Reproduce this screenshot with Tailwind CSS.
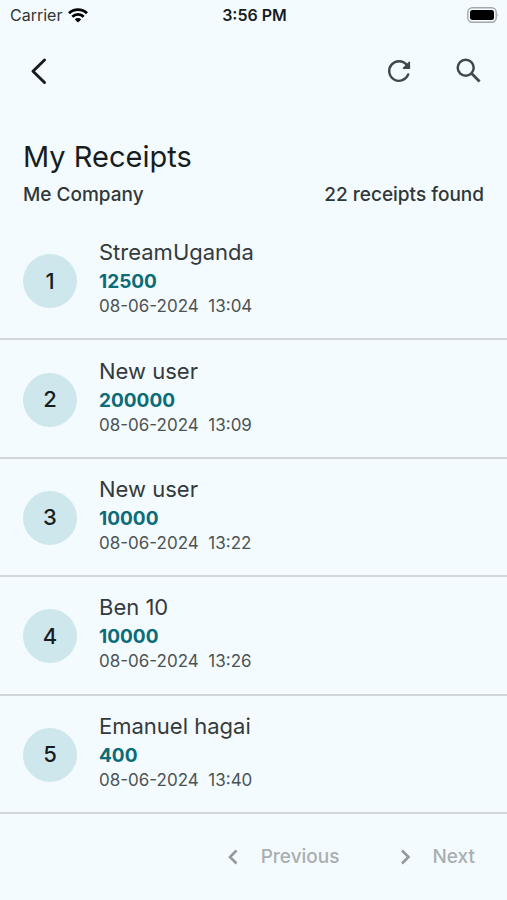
<!DOCTYPE html>
<html lang="en">
<head>
<meta charset="utf-8">
<meta name="viewport" content="width=device-width, initial-scale=1">
<title>My Receipts</title>
<script src="https://cdn.jsdelivr.net/npm/@tailwindcss/browser@4"></script>
</head>
<body class="flex min-h-screen flex-col bg-[#f4fbfe] font-['Inter','Liberation_Sans',sans-serif] text-[#171d1e]">
  <!-- Status bar -->
  <div class="grid h-[30px] grid-cols-3 items-center pr-2 pl-[10px] text-base">
    <div class="flex items-center gap-[6px] text-[#303536]">
      <span>Carrier</span>
      <svg class="h-[15px] w-5" viewBox="0 0 20 15" fill="none" stroke="#000" stroke-width="2.8" aria-label="Wi-Fi">
        <path d="M1 5.2a13 13 0 0 1 18 0M4.3 8.7a8.3 8.3 0 0 1 11.4 0"/>
        <path d="M10 14.6 6.8 11.4a4.6 4.6 0 0 1 6.4 0Z" fill="#000" stroke="none"/>
      </svg>
    </div>
    <div class="text-center font-semibold">3:56 PM</div>
    <svg class="h-4 w-8 justify-self-end" viewBox="0 0 32 16" aria-label="Battery full">
      <rect x=".8" y=".8" width="28.4" height="14.4" rx="4.5" fill="none" stroke="#a3a8a9" stroke-width="1.4"/>
      <rect x="3" y="3" width="24" height="10" rx="2.5" fill="#000"/>
      <path d="M30.5 6q1.5 2 0 4z" fill="#a3a8a9"/>
    </svg>
  </div>

  <!-- Toolbar -->
  <header class="flex h-[82px] items-center justify-between px-[22px]">
    <button class="grid size-8 place-items-center" aria-label="Back">
      <svg class="size-7" viewBox="0 0 28 28" fill="none" stroke="#171d1e" stroke-width="3" stroke-linecap="round" stroke-linejoin="round"><path d="M20.5 3 9 14.2 20.5 25.5"/></svg>
    </button>
    <div class="flex gap-[38px]">
      <button class="grid size-8 place-items-center" aria-label="Refresh">
        <svg class="size-8" viewBox="0 0 32 32" fill="none" stroke="#3f484a" stroke-width="2.4" stroke-linecap="round" stroke-linejoin="round">
          <path d="M25.2 19.4a9.8 9.8 0 1 1-1.6-9.6L26 12.2"/>
          <path d="M26.4 7.2v6h-6z" fill="#3f484a" stroke-width="1.4"/>
        </svg>
      </button>
      <button class="grid size-8 place-items-center" aria-label="Search">
        <svg class="size-8" viewBox="0 0 32 32" fill="none" stroke="#3f484a" stroke-width="2.5"><circle cx="12.7" cy="12.8" r="8"/><path d="m18.6 18.6 8 7.8" stroke-width="2.8"/></svg>
      </button>
    </div>
  </header>

  <!-- Heading -->
  <section class="px-[23px] pt-[26px]">
    <h1 class="text-[29px] leading-[38px]">My Receipts</h1>
    <div class="flex h-[46px] items-start justify-between pt-[5px] text-[19px] leading-[28px] font-medium text-[#303738]">
      <p>Me Company</p>
      <p>22 receipts found</p>
    </div>
  </section>

  <!-- Receipts -->
  <ol class="grid flex-1 auto-rows-fr">
    <li class="flex items-center gap-[22px] border-b-2 border-[#d0d6d9] px-[23px] pt-[2px]">
      <span class="grid size-[54px] shrink-0 place-items-center rounded-full bg-[#cee7ec] text-[22px] font-medium">1</span>
      <div class="pb-[10px]">
        <h2 class="text-[22px] leading-[32px] text-[#343a3c]">StreamUganda</h2>
        <p class="text-[19px] leading-[28px] font-bold text-[#0b6c78]">12500</p>
        <p class="text-[17px] leading-[20px] whitespace-pre text-[#4c5355]">08-06-2024  13:04</p>
      </div>
    </li>
    <li class="flex items-center gap-[22px] border-b-2 border-[#d0d6d9] px-[23px] pt-[2px]">
      <span class="grid size-[54px] shrink-0 place-items-center rounded-full bg-[#cee7ec] text-[22px] font-medium">2</span>
      <div class="pb-[10px]">
        <h2 class="text-[22px] leading-[32px] text-[#343a3c]">New user</h2>
        <p class="text-[19px] leading-[28px] font-bold text-[#0b6c78]">200000</p>
        <p class="text-[17px] leading-[20px] whitespace-pre text-[#4c5355]">08-06-2024  13:09</p>
      </div>
    </li>
    <li class="flex items-center gap-[22px] border-b-2 border-[#d0d6d9] px-[23px] pt-[2px]">
      <span class="grid size-[54px] shrink-0 place-items-center rounded-full bg-[#cee7ec] text-[22px] font-medium">3</span>
      <div class="pb-[10px]">
        <h2 class="text-[22px] leading-[32px] text-[#343a3c]">New user</h2>
        <p class="text-[19px] leading-[28px] font-bold text-[#0b6c78]">10000</p>
        <p class="text-[17px] leading-[20px] whitespace-pre text-[#4c5355]">08-06-2024  13:22</p>
      </div>
    </li>
    <li class="flex items-center gap-[22px] border-b-2 border-[#d0d6d9] px-[23px] pt-[2px]">
      <span class="grid size-[54px] shrink-0 place-items-center rounded-full bg-[#cee7ec] text-[22px] font-medium">4</span>
      <div class="pb-[10px]">
        <h2 class="text-[22px] leading-[32px] text-[#343a3c]">Ben 10</h2>
        <p class="text-[19px] leading-[28px] font-bold text-[#0b6c78]">10000</p>
        <p class="text-[17px] leading-[20px] whitespace-pre text-[#4c5355]">08-06-2024  13:26</p>
      </div>
    </li>
    <li class="flex items-center gap-[22px] border-b-2 border-[#d0d6d9] px-[23px] pt-[2px]">
      <span class="grid size-[54px] shrink-0 place-items-center rounded-full bg-[#cee7ec] text-[22px] font-medium">5</span>
      <div class="pb-[10px]">
        <h2 class="text-[22px] leading-[32px] text-[#343a3c]">Emanuel hagai</h2>
        <p class="text-[19px] leading-[28px] font-bold text-[#0b6c78]">400</p>
        <p class="text-[17px] leading-[20px] whitespace-pre text-[#4c5355]">08-06-2024  13:40</p>
      </div>
    </li>
  </ol>

  <!-- Pagination -->
  <nav class="flex h-[86px] items-center justify-end gap-[57px] pr-8 text-[19px] font-medium text-[#a9afb1]" aria-label="Pagination">
    <button class="flex items-center gap-[18px]" disabled>
      <svg class="size-[18px]" viewBox="0 0 18 18" fill="none" stroke="#94999b" stroke-width="2.6"><path d="M11.5 2.5 5 9l6.500 6.500"/></svg>
      Previous
    </button>
    <button class="flex items-center gap-[18px]" disabled>
      <svg class="size-[18px]" viewBox="0 0 18 18" fill="none" stroke="#94999b" stroke-width="2.6"><path d="M6 2.500 12.500 9 6 15.500"/></svg>
      Next
    </button>
  </nav>
</body>
</html>
